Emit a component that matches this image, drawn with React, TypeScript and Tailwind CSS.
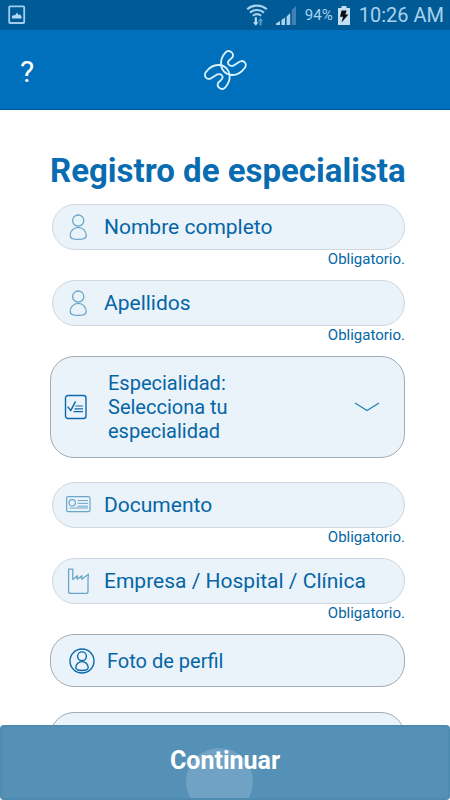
import { useState } from "react";
import type { ReactNode } from "react";

function PictureIcon() {
  return (
    <svg width="18" height="20" viewBox="0 0 18 20" fill="none">
      <rect x="1.2" y="1.4" width="15" height="16.6" rx="0.8" stroke="#a3cdf0" strokeWidth="1.8" />
      <path d="M4 13.5v-2.200l2-1.600 1 .7 2-2.800 1.600 2.600 1-.9 1.900 2v2.200z" fill="#b5daf5" />
    </svg>
  );
}

function WifiIcon() {
  return (
    <svg width="22" height="23" viewBox="0 0 22 23" fill="none">
      <g stroke="#a9d2ee" strokeWidth="2.1">
        <path d="M1.2 5.2c5.6-4.8 14-4.8 19.6 0" />
        <path d="M4 8.6c4-3.5 10-3.5 14 0" />
        <path d="M6.8 11.8c2.5-2 5.9-2 8.4 0" />
      </g>
      <path d="M8.700 13.200h2.200v5h1.700l-2.800 3.600L7 18.200h1.700z" fill="#b5daf5" />
      <path d="M13.600 21.400h2v-4.200h1.600l-2.600-3.400-2.600 3.400h1.600z" fill="#5d9cca" />
    </svg>
  );
}

function SignalIcon() {
  return (
    <svg width="21" height="21" viewBox="0 0 21 21">
      <g fill="#a9d2ee">
        <path d="M0 20v-1.400l4-2.600v4z" />
        <path d="M5.400 20v-5l3.600-2.600V20z" />
        <path d="M10.600 20v-8.600L14.200 8v12z" />
      </g>
      <path d="M15.800 20V5L20 1v19z" fill="#3f82b3" />
    </svg>
  );
}

function BatteryIcon() {
  return (
    <svg width="14" height="21" viewBox="0 0 14 21">
      <path d="M4.500 1h5v2H13v17H1V3h3.500z" fill="#c3dff2" />
      <path d="M4.600 5.400h5L8.400 9.600h3L4.600 17.600l1.400-5.800H3z" fill="#0b0f14" />
    </svg>
  );
}

function Logo() {
  const link =
    "M91 38A13 13 0 0 1 113 51C109 57 99 60 99 68C99 77 110 80 117 76L131 67A12 12 0 0 1 149 84C138 99 125 106 110 105C91 104 79 90 78 73C77 57 84 46 91 38Z";
  return (
    <svg width="60" height="60" viewBox="0 0 180 180" fill="none" stroke="#d8f1fb" strokeWidth="5.5">
      <path d={link} />
      <path d={link} transform="rotate(180 91 90)" />
    </svg>
  );
}

function PersonIcon() {
  return (
    <svg width="28" height="28" viewBox="0 0 28 28" fill="none" stroke="#6ba6c9" strokeWidth="1.300">
      <circle cx="14.200" cy="7.600" r="5.600" />
      <path d="M14.200 14.400c-4.800 0-8 3.800-8 8 0 2.800 3 4 8 4s8-1.200 8-4c0-4.200-3.200-8-8-8z" />
    </svg>
  );
}

function CardIcon() {
  return (
    <svg width="28" height="28" viewBox="0 0 28 28" fill="none" stroke="#6ba6c9" strokeWidth="1.200">
      <rect x="2.600" y="5.600" width="23.400" height="15" rx="1.600" />
      <circle cx="8.200" cy="11.800" r="3.200" />
      <path d="M13.500 9.600h10.500M13.500 12.400h10.500M13.500 15.200h10.500M5.500 17h18.500" strokeWidth="1" />
    </svg>
  );
}

function FactoryIcon() {
  return (
    <svg width="28" height="28" viewBox="0 0 28 28" fill="none" stroke="#6ba6c9" strokeWidth="1.300" strokeLinejoin="round">
      <path d="M4.600 2.200h4.200v10.200l4.600-3.600v3.400l4.400-3.400v3.400l6.600-5-.4 5v12.200a2 2 0 0 1-2 2H6.600a2 2 0 0 1-2-2z" />
    </svg>
  );
}

function ChecklistIcon() {
  return (
    <svg width="24" height="26" viewBox="0 0 24 26" fill="none" stroke="#0a6aab">
      <rect x="1.500" y="1.500" width="20.500" height="23" rx="2.500" strokeWidth="1.400" />
      <path d="M3.600 12.600l3.200 3.800 4.800-9" strokeWidth="1.400" />
      <path d="M11.500 12h7.500M10.500 14.800h8.500M9.500 17.600h9.500" strokeWidth="1.200" />
    </svg>
  );
}

function AvatarIcon() {
  return (
    <svg width="26" height="26" viewBox="0 0 26 26" fill="none" stroke="#0a6aab" strokeWidth="1.400">
      <circle cx="13" cy="13" r="12" />
      <circle cx="13" cy="8.300" r="4.400" />
      <path d="M13 13.600c-3.800 0-6.200 2.900-6.200 6 0 2 2.400 2.900 6.200 2.900s6.200-.9 6.200-2.900c0-3.100-2.400-6-6.200-6z" />
    </svg>
  );
}

interface FieldProps {
  id: string;
  label: string;
  icon: ReactNode;
}

function Field({ id, label, icon }: FieldProps) {
  return (
    <div className="mb-3 pl-0.5">
      <div className="flex h-[46px] items-center gap-3 rounded-full border border-[#cfd6dd] bg-[#eaf2fa] pl-[11px] pr-4">
        <label htmlFor={id} aria-label={label} className="shrink-0">
          {icon}
        </label>
        <input
          id={id}
          type="text"
          placeholder={label}
          className="h-full w-full min-w-0 bg-transparent text-[21px] text-[#0566a5] outline-none placeholder:text-[#0566a5]"
        />
      </div>
      <p className="text-right text-[15px] leading-[18px] text-[#0566a5]">Obligatorio.</p>
    </div>
  );
}

const specialties = ["Cardiología", "Dermatología", "Neurología", "Pediatría"];

export default function App() {
  const [specialty, setSpecialty] = useState("");

  return (
    <div className="flex h-screen flex-col bg-white font-[Roboto,sans-serif]">
      {/* Status bar */}
      <div className="flex h-[30px] shrink-0 items-center bg-[#005a96] pl-2 pr-1.5 text-[#a9d2ee]">
        <PictureIcon />
        <div className="ml-auto flex items-center">
          <WifiIcon />
          <span className="ml-2">
            <SignalIcon />
          </span>
          <span className="ml-2 text-[15px]">94%</span>
          <span className="ml-1">
            <BatteryIcon />
          </span>
          <span className="ml-2 text-[20px]">10:26 AM</span>
        </div>
      </div>

      {/* Header */}
      <header className="grid h-20 shrink-0 grid-cols-3 items-center border-b border-[#00599c] bg-[#0070bc] px-5">
        <button aria-label="Ayuda" className="justify-self-start pt-1 text-[30px] text-white">
          ?
        </button>
        <div className="justify-self-center">
          <Logo />
        </div>
      </header>

      {/* Form */}
      <form id="registro" className="min-h-0 flex-1 overflow-y-auto pl-[50px] pr-[45px] pt-10 [scrollbar-width:none]">
        <h1 className="mb-3 whitespace-nowrap text-center text-[33px] leading-[42px] font-bold text-[#0a6cb0]">
          Registro de especialista
        </h1>

        <Field id="nombre" label="Nombre completo" icon={<PersonIcon />} />
        <Field id="apellidos" label="Apellidos" icon={<PersonIcon />} />

        <label className="relative mb-6 flex items-center rounded-3xl border border-[#a3abb3] bg-[#eaf2fa] py-[14px] pl-[13px] pr-6 text-[20px] leading-6 text-[#0566a5]">
          <ChecklistIcon />
          <span className="ml-5 w-[150px]">Especialidad: {specialty || "Selecciona tu especialidad"}</span>
          <svg className="ml-auto" width="26" height="10" viewBox="0 0 26 10" fill="none">
            <path d="M1 1l12 7.500L25 1" stroke="#2480b8" strokeWidth="1.300" />
          </svg>
          <select
            value={specialty}
            onChange={(e) => setSpecialty(e.target.value)}
            className="absolute inset-0 cursor-pointer opacity-0"
          >
            <option value="">Selecciona tu especialidad</option>
            {specialties.map((s) => (
              <option key={s}>{s}</option>
            ))}
          </select>
        </label>

        <Field id="documento" label="Documento" icon={<CardIcon />} />
        <Field id="empresa" label="Empresa / Hospital / Clínica" icon={<FactoryIcon />} />

        <label className="mb-[25px] flex h-[53px] cursor-pointer items-center gap-3 rounded-3xl border border-[#a3abb3] bg-[#eaf2fa] px-[18px] text-[20px] text-[#0566a5]">
          <AvatarIcon />
          Foto de perfil
          <input type="file" accept="image/*" className="sr-only" />
        </label>
        <label className="mb-[25px] flex h-[53px] cursor-pointer items-center rounded-3xl border border-[#a3abb3] bg-[#eaf2fa]">
          <input type="file" aria-label="Adjuntar documento" className="sr-only" />
        </label>
      </form>

      <button
        type="submit"
        form="registro"
        className="relative h-[75px] shrink-0 overflow-hidden rounded-sm border-2 border-[#4e8bb1] bg-[#5591b7] pb-1 text-[25px] font-bold text-white"
      >
        {/* Touch ripple */}
        <span className="absolute left-[184px] top-[21px] size-[67px] rounded-full bg-[#6fa2c4]" />
        <span className="relative">Continuar</span>
      </button>
    </div>
  );
}
